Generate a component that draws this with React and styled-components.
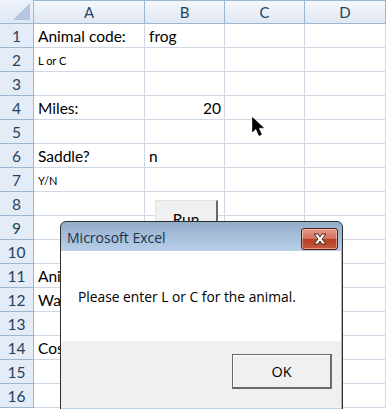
import React from "react";
import styled, { createGlobalStyle } from "styled-components";

const GlobalStyle = createGlobalStyle`
  html, body {
    margin: 0;
    padding: 0;
    background: #ffffff;
    overflow: hidden;
  }
`;

const Page = styled.div`
  position: relative;
  width: 386px;
  height: 409px;
  overflow: hidden;
  font-family: "Lato", "Open Sans", sans-serif;
`;

const Sheet = styled.div`
  display: grid;
  grid-template-columns: 34px 111px 80px 80px 81px;
  grid-auto-rows: 24px;
`;

const Corner = styled.div`
  position: relative;
  background: linear-gradient(#eef3fa, #dfe8f5);
  border-right: 1px solid #9eb6ce;
  border-bottom: 1px solid #9eb6ce;
  box-sizing: border-box;
  &::after {
    content: "";
    position: absolute;
    right: 3px;
    bottom: 3px;
    width: 0;
    height: 0;
    border-left: 17px solid transparent;
    border-bottom: 17px solid #b4c6e0;
  }
`;

const ColHead = styled.div`
  display: flex;
  align-items: center;
  justify-content: center;
  background: linear-gradient(#f4f7fc, #e0e8f3);
  border-right: 1px solid #9eb6ce;
  border-bottom: 1px solid #9eb6ce;
  border-top: 1px solid #9eb6ce;
  box-sizing: border-box;
  font-size: 15px;
  color: #27415f;
`;

const RowHead = styled.div`
  display: flex;
  align-items: center;
  justify-content: center;
  background: #e4ecf7;
  border-right: 1px solid #9eb6ce;
  border-bottom: 1px solid #9eb6ce;
  box-sizing: border-box;
  font-size: 15.5px;
  color: #27415f;
`;

const Cell = styled.div`
  display: flex;
  align-items: center;
  justify-content: ${(p) => (p.$right ? "flex-end" : "flex-start")};
  padding: 1px 3px 0 4px;
  border-right: 1px solid #d0d7e5;
  border-bottom: 1px solid #d0d7e5;
  box-sizing: border-box;
  white-space: nowrap;
  overflow: visible;
  font-size: ${(p) => (p.$small ? "11px" : "15.5px")};
  color: #000000;
`;

const RunButton = styled.div`
  position: absolute;
  left: 155px;
  top: 200px;
  width: 63px;
  height: 28px;
  box-sizing: border-box;
  background: #f0f0f0;
  border-top: 1px solid #e3e3e3;
  border-left: 1px solid #e3e3e3;
  border-right: 2px solid #696969;
  display: flex;
  justify-content: center;
  padding-top: 9px;
  font-size: 15.5px;
  color: #000;
`;

const Cursor = styled.svg`
  position: absolute;
  left: 252px;
  top: 117px;
`;

const Dialog = styled.div`
  position: absolute;
  left: 60px;
  top: 221px;
  width: 283px;
  height: 190px;
  box-sizing: border-box;
  border: 1px solid #2f2f2f;
  border-radius: 6px 6px 0 0;
  background: linear-gradient(#94adc9, #b9d1ea 30px, #b9d1ea);
  display: flex;
  flex-direction: column;
  padding: 0 1px 2px 0;
  box-shadow: inset -1px 0 0 #6fc6ef, inset 0 -1px 0 #6fc6ef;
  overflow: hidden;
`;

const TitleBar = styled.div`
  height: 29px;
  display: flex;
  align-items: center;
  justify-content: space-between;
  padding: 0 3px 0 6px;
  flex-shrink: 0;
`;

const Title = styled.span`
  font-family: "Open Sans", "Noto Sans", sans-serif;
  font-size: 14px;
  color: #1b2f48;
  padding-top: 2px;
`;

const CloseButton = styled.div`
  width: 37px;
  height: 22px;
  box-sizing: border-box;
  margin-top: 4px;
  border: 1px solid #5a1a1a;
  border-radius: 3px;
  background: linear-gradient(#e49a88, #d4715c 48%, #b63e26 52%, #c55a3e);
  box-shadow: inset 0 0 0 1px rgba(255, 220, 210, 0.5);
  display: flex;
  align-items: center;
  justify-content: center;
`;

const Body = styled.div`
  flex: 0 0 90px;
  background: #ffffff;
  display: flex;
  align-items: center;
  padding-left: 17px;
  font-family: "Open Sans", "Noto Sans", sans-serif;
  font-size: 13.8px;
  color: #000;
`;

const Footer = styled.div`
  flex: 1;
  background: #f0f0f0;
  display: flex;
  justify-content: flex-end;
  align-items: flex-start;
  padding: 13px 9px 0 0;
`;

const OkButton = styled.div`
  width: 100px;
  height: 35px;
  box-sizing: border-box;
  border: 1px solid #6a6a6a;
  border-right-width: 2px;
  border-bottom-width: 2px;
  background: #f0f0f0;
  box-shadow: inset 1px 1px 0 #ffffff;
  display: flex;
  align-items: center;
  justify-content: center;
  font-family: "Open Sans", "Noto Sans", sans-serif;
  font-size: 14.5px;
  color: #000;
`;

const rows = [
  ["Animal code:", "frog"],
  [{ t: "L or C", small: true }, ""],
  ["", ""],
  ["Miles:", { t: "20", right: true }],
  ["", ""],
  ["Saddle?", "n"],
  [{ t: "Y/N", small: true }, ""],
  ["", ""],
  ["", ""],
  ["", ""],
  ["Animal:", ""],
  ["Water:", ""],
  ["", ""],
  ["Cost:", ""],
  ["", ""],
  ["", ""],
];

const renderCell = (v, key) => {
  const item = typeof v === "string" ? { t: v } : v;
  return (
    <Cell key={key} $small={item.small} $right={item.right}>
      {item.t}
    </Cell>
  );
};

export default function App() {
  return (
    <Page>
      <GlobalStyle />
      <Sheet>
        <Corner />
        {["A", "B", "C", "D"].map((c) => (
          <ColHead key={c}>{c}</ColHead>
        ))}
        {rows.map((r, i) => (
          <React.Fragment key={i}>
            <RowHead>{i + 1}</RowHead>
            {renderCell(r[0], "a" + i)}
            {renderCell(r[1], "b" + i)}
            {renderCell("", "c" + i)}
            {renderCell("", "d" + i)}
          </React.Fragment>
        ))}
      </Sheet>

      <RunButton>Run</RunButton>

      <Cursor width="13" height="20" viewBox="0 0 13 20">
        <path d="M0.5 0.5 L0.5 15 L4 11.5 L7 18.5 L9.5 17.5 L6.5 10.8 L11.5 10.8 Z" fill="#000" stroke="#000" strokeWidth="0.6" />
      </Cursor>

      <Dialog>
        <TitleBar>
          <Title>Microsoft Excel</Title>
          <CloseButton>
            <svg width="18" height="14" viewBox="0 0 18 14">
              <path
                d="M3 2 L7 2 L9 5 L11 2 L15 2 L11 7 L15 12 L11 12 L9 9 L7 12 L3 12 L7 7 Z"
                fill="#ffffff"
                stroke="#4a2a2a"
                strokeWidth="1"
                strokeLinejoin="round"
              />
            </svg>
          </CloseButton>
        </TitleBar>
        <Body>Please enter L or C for the animal.</Body>
        <Footer>
          <OkButton>OK</OkButton>
        </Footer>
      </Dialog>
    </Page>
  );
}
